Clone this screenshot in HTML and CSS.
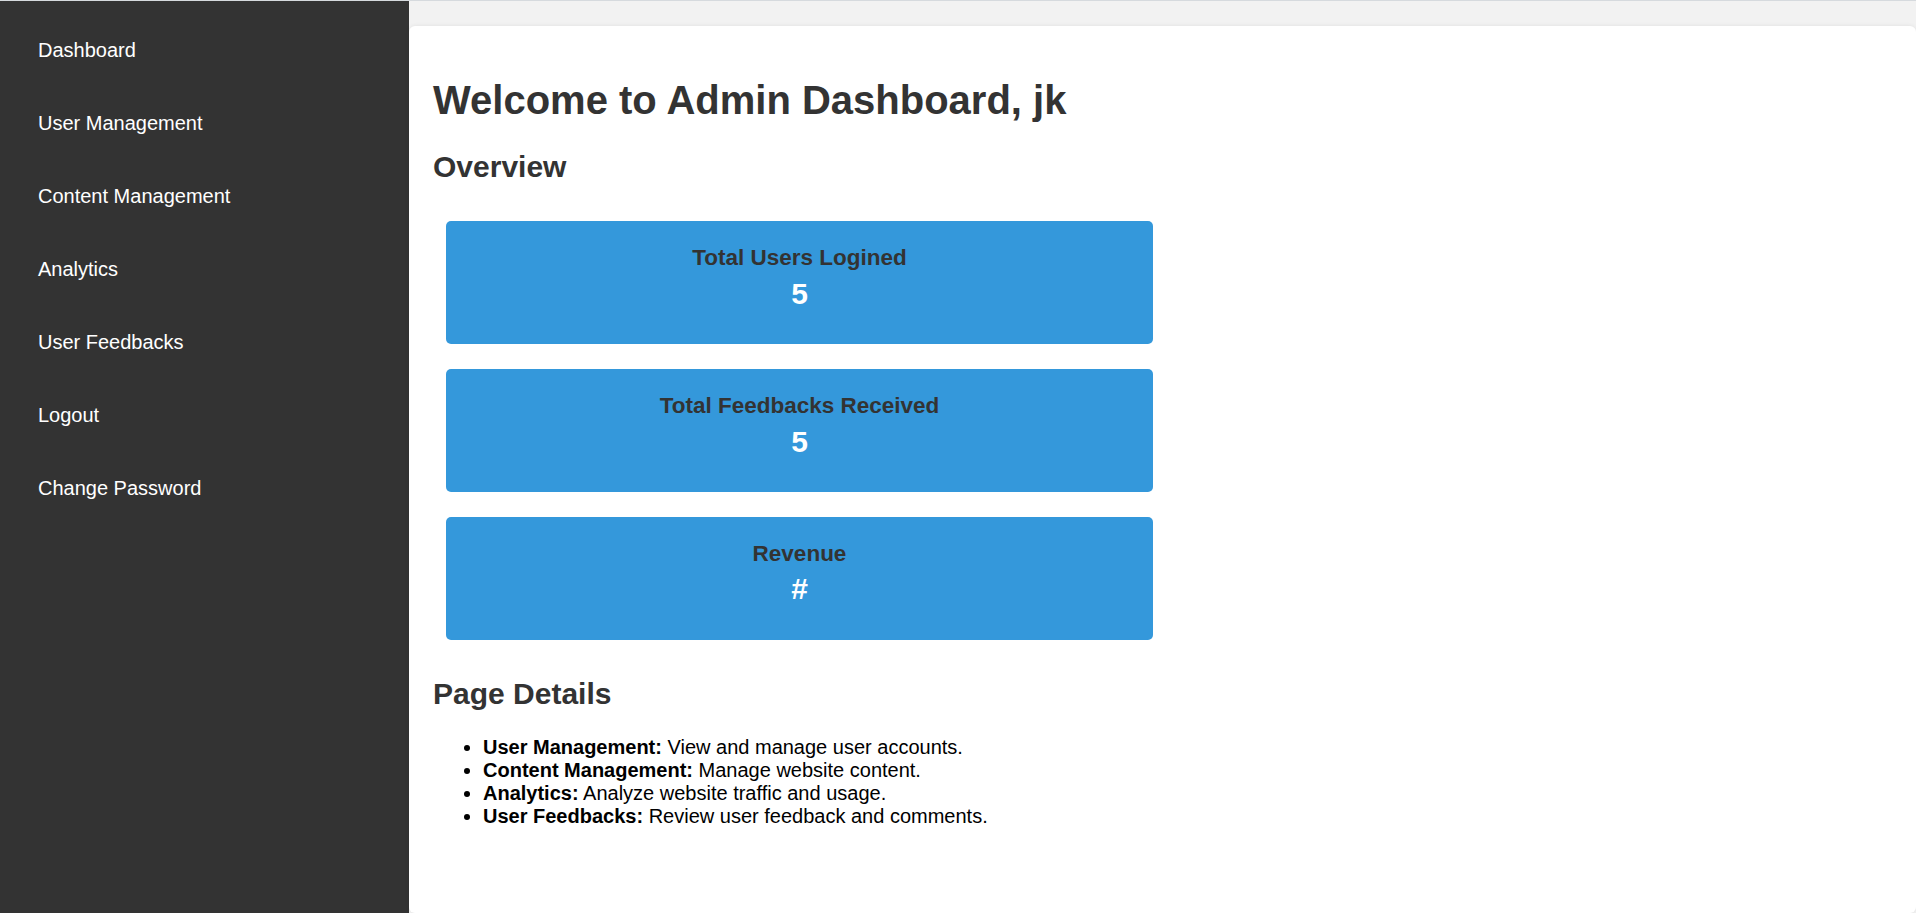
FILE: index.html
```html
<!DOCTYPE html>
<html lang="en">
<head>
<meta charset="UTF-8">
<title>Admin Dashboard</title>
<link rel="stylesheet" href="styles.css">
</head>
<body>
<div class="layout">
  <nav class="sidebar">
    <a class="nav-link" href="#">Dashboard</a>
    <a class="nav-link" href="#">User Management</a>
    <a class="nav-link" href="#">Content Management</a>
    <a class="nav-link" href="#">Analytics</a>
    <a class="nav-link" href="#">User Feedbacks</a>
    <a class="nav-link" href="#">Logout</a>
    <a class="nav-link" href="#">Change Password</a>
  </nav>
  <main class="main">
    <div class="panel">
      <h1 class="title">Welcome to Admin Dashboard, jk</h1>
      <h2 class="section-title">Overview</h2>
      <div class="stats">
        <div class="stat-card">
          <h3 class="stat-label">Total Users Logined</h3>
          <p class="stat-value">5</p>
        </div>
        <div class="stat-card">
          <h3 class="stat-label">Total Feedbacks Received</h3>
          <p class="stat-value">5</p>
        </div>
        <div class="stat-card">
          <h3 class="stat-label">Revenue</h3>
          <p class="stat-value">#</p>
        </div>
      </div>
      <h2 class="section-title">Page Details</h2>
      <ul class="details">
        <li><strong>User Management:</strong> View and manage user accounts.</li>
        <li><strong>Content Management:</strong> Manage website content.</li>
        <li><strong>Analytics:</strong> Analyze website traffic and usage.</li>
        <li><strong>User Feedbacks:</strong> Review user feedback and comments.</li>
      </ul>
    </div>
  </main>
</div>
</body>
</html>
```
FILE: styles.css
```css
* {
  box-sizing: border-box;
}

html, body {
  margin: 0;
  padding: 0;
}

body {
  font-family: "Liberation Sans", Arial, sans-serif;
  border-top: 1px solid #d6dade;
  height: 100vh;
  overflow: hidden;
  background: #f2f2f2;
}

.layout {
  display: flex;
  height: calc(100vh - 1px);
}

.sidebar {
  width: 409px;
  flex-shrink: 0;
  background: #333333;
  padding-top: 12.5px;
  display: flex;
  flex-direction: column;
}

.nav-link {
  display: block;
  color: #ffffff;
  text-decoration: none;
  font-size: 20px;
  line-height: 23px;
  padding: 25px 38px;
}

.main {
  flex: 1;
  display: flex;
  flex-direction: column;
  padding-top: 25px;
  background: #f2f2f2;
}

.panel {
  flex: 1;
  background: #ffffff;
  border-radius: 6px;
  box-shadow: 0 0 4px rgba(0, 0, 0, 0.08);
  padding: 25px 24px;
}

.title {
  font-size: 40px;
  color: #333333;
  margin: 26.8px 0;
}

.section-title {
  font-size: 30px;
  color: #333333;
  margin: 24.9px 0;
}

.stats {
  display: flex;
  flex-direction: column;
  align-items: flex-start;
}

.stat-card {
  width: 707px;
  margin: 12.5px 12.5px 12.5px 13px;
  padding: 24px 25px 26.5px;
  background: #3498db;
  border-radius: 5px;
  text-align: center;
}

.stat-label {
  font-size: 22.5px;
  color: #333333;
  margin: 0 0 5.75px;
}

.stat-value {
  font-size: 30px;
  font-weight: bold;
  color: #ffffff;
  margin: 0 0 6.6px;
}

.details {
  font-size: 20px;
  color: #000000;
  margin: 20px 0;
  padding-left: 50px;
}
```
